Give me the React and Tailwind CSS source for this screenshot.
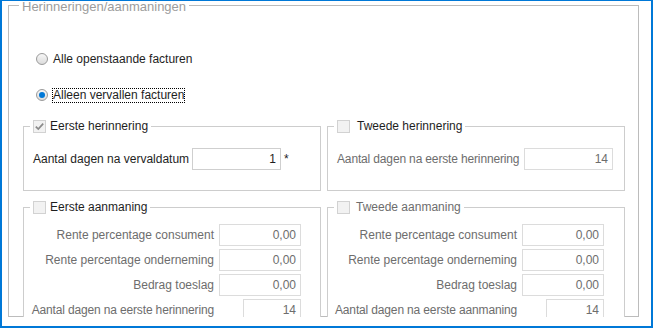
import { useState } from "react";

function Radio({ checked }) {
  return (
    <span className="w-[12px] h-[12px] rounded-full border border-[#9a9a9a] bg-linear-to-b from-[#f7f7f7] to-[#dcdcdc] flex items-center justify-center shrink-0">
      {checked && <span className="w-[6px] h-[6px] rounded-full bg-[#0078d7]" />}
    </span>
  );
}

function Check({ checked }) {
  return (
    <span className="w-[13px] h-[13px] border border-[#d2d2d2] bg-[#f2f2f2] flex items-center justify-center shrink-0">
      {checked && (
        <svg width="11" height="11" viewBox="0 0 11 11">
          <path d="M1.8 5.6 L4.3 8.1 L9.2 2.6" fill="none" stroke="#8a8a8a" strokeWidth="1.7" />
        </svg>
      )}
    </span>
  );
}

function Field({ value, w = "w-[82px]", dim = true }) {
  return (
    <div
      className={`${w} h-[22px] border bg-white flex items-center justify-end pr-[4px] ${
        dim ? "border-[#dcdcdc] text-[#6d6d6d]" : "border-[#cfcfcf] text-[#1e1e1e]"
      }`}
    >
      {value}
    </div>
  );
}

function Box({ title, checked, dim, gap, className, children }) {
  return (
    <div className={`relative border border-[#cdcdcd] bg-white ${className}`}>
      <div className={`absolute -top-[9px] left-[6px] h-[16px] px-[3px] bg-white flex items-center ${gap}`}>
        <Check checked={checked} />
        <span className={dim ? "text-[#6d6d6d]" : "text-[#1e1e1e]"}>{title}</span>
      </div>
      {children}
    </div>
  );
}

function Rows({ last, lastLabel, pr }) {
  const rows = [
    ["Rente percentage consument", "0,00"],
    ["Rente percentage onderneming", "0,00"],
    ["Bedrag toeslag", "0,00"],
  ];
  return (
    <div className={`grid grid-cols-[1fr_82px] gap-x-[5px] gap-y-[3px] pt-[16px] ${pr} text-[#6d6d6d]`}>
      {rows.map(([l, v]) => (
        <div key={l} className="contents">
          <div className="h-[22px] flex items-center justify-end whitespace-nowrap">{l}</div>
          <Field value={v} />
        </div>
      ))}
      <div className="h-[22px] flex items-center justify-end whitespace-nowrap tracking-[-0.15px]">{lastLabel}</div>
      <div className="flex justify-end">
        <Field value={last} w="w-[58px]" />
      </div>
    </div>
  );
}

export default function App() {
  const [choice, setChoice] = useState("vervallen");

  return (
    <div
      className="w-[653px] h-[328px] bg-white border-t border-l-2 border-r-2 border-b-2 border-[#0078d7] pl-[6px] pt-[4px] overflow-hidden text-[12px] leading-[16px]"
      style={{ fontFamily: '"Liberation Sans", Arial, sans-serif' }}
    >
      {/* GROUP */}
      <div className="relative w-[631px] h-[312px] border border-[#bcbcbc] pl-[14px] pr-[13px] pt-[45px]">
        <div className="absolute -top-[5px] left-[10px] h-[11px] px-[3px] bg-white text-[#9c9c9c] text-[13px] leading-[11px]">
          Herinneringen/aanmaningen
        </div>

        {/* RADIOS */}
        <div className="pl-[13px] flex flex-col gap-[20px] text-[#1e1e1e]">
          <div className="h-[16px] flex items-center gap-[4px] cursor-default" onClick={() => setChoice("alle")}>
            <Radio checked={choice === "alle"} />
            <span className="border border-transparent leading-[13px]">Alle openstaande facturen</span>
          </div>
          <div className="h-[16px] flex items-center gap-[4px] cursor-default" onClick={() => setChoice("vervallen")}>
            <Radio checked={choice === "vervallen"} />
            <span className="border border-dotted border-black leading-[13px]">Alleen vervallen facturen</span>
          </div>
        </div>

        {/* HERINNERINGEN */}
        <div className="mt-[23px] grid grid-cols-[298px_298px] gap-x-[6px]">
          <Box title="Eerste herinnering" checked gap="gap-[4px]" className="h-[65px]">
            <div className="pt-[21px] pl-[9px] flex items-start text-[#1e1e1e]">
              <div className="w-[159px] h-[22px] flex items-center whitespace-nowrap">Aantal dagen na vervaldatum</div>
              <Field value="1" w="w-[89px]" dim={false} />
              <span className="ml-[3px] mt-[3px]">*</span>
            </div>
          </Box>
          <Box title="Tweede herinnering" gap="gap-[7px]" className="h-[65px]">
            <div className="pt-[21px] pl-[9px] flex items-start text-[#6d6d6d]">
              <div className="w-[187px] h-[22px] flex items-center whitespace-nowrap tracking-[-0.15px]">
                Aantal dagen na eerste herinnering
              </div>
              <Field value="14" w="w-[89px]" />
            </div>
          </Box>
        </div>

        {/* AANMANINGEN */}
        <div className="mt-[7px] h-[119px] pt-[9px] -mb-px overflow-hidden">
          <div className="grid grid-cols-[298px_298px] gap-x-[6px]">
            <Box title="Eerste aanmaning" gap="gap-[4px]" className="h-[140px]">
              <Rows last="14" lastLabel="Aantal dagen na eerste herinnering" pr="pr-[19px]" />
            </Box>
            <Box title="Tweede aanmaning" dim gap="gap-[6px]" className="h-[140px]">
              <Rows last="14" lastLabel="Aantal dagen na eerste aanmaning" pr="pr-[20px]" />
            </Box>
          </div>
        </div>
      </div>
    </div>
  );
}
